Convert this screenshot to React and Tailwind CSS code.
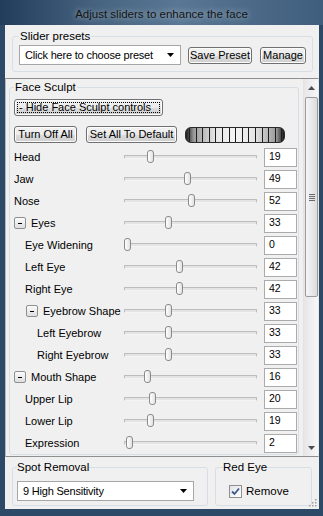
import React from "react";

// slider rows of the Face Sculpt group
const rows = [
  { label: "Head", value: 19, level: "l0" },
  { label: "Jaw", value: 49, level: "l0" },
  { label: "Nose", value: 52, level: "l0" },
  { label: "Eyes", value: 33, level: "l0", toggle: true },
  { label: "Eye Widening", value: 0, level: "l1" },
  { label: "Left Eye", value: 42, level: "l1" },
  { label: "Right Eye", value: 42, level: "l1" },
  { label: "Eyebrow Shape", value: 33, level: "t1", toggle: true },
  { label: "Left Eyebrow", value: 33, level: "l2" },
  { label: "Right Eyebrow", value: 33, level: "l2" },
  { label: "Mouth Shape", value: 16, level: "l0", toggle: true },
  { label: "Upper Lip", value: 20, level: "l1" },
  { label: "Lower Lip", value: 19, level: "l1" },
  { label: "Expression", value: 2, level: "l1" },
];

const indent = {
  l0: "pl-0",
  l1: "pl-[11px]",
  t1: "pl-[12px]",
  l2: "pl-[23px]",
};

const btn =
  "h-[17px] whitespace-nowrap rounded-[3px] border border-[#707070] bg-[linear-gradient(#f2f2f2_0%,#ebebeb_50%,#dddddd_51%,#cfcfcf_100%)] shadow-[inset_0_0_0_1px_#fcfcfc] text-[11px] leading-none text-black";

function Arrow({ up }) {
  return (
    <svg width="7" height="4" viewBox="0 0 7 4">
      <path d={up ? "M0 4 L3.5 0 L7 4 Z" : "M0 0 L7 0 L3.5 4 Z"} fill="#4d4d4d" />
    </svg>
  );
}

function Combo({ text, className }) {
  return (
    <div
      className={`flex h-[20px] items-center justify-between whitespace-nowrap border border-[#a6a6a6] bg-white pl-[5px] pr-[6px] text-[11px] tracking-[-0.2px] ${className}`}
    >
      <span>{text}</span>
      <svg width="7" height="4" viewBox="0 0 7 4">
        <path d="M0 0 L7 0 L3.5 4 Z" fill="#000" />
      </svg>
    </div>
  );
}

function Toggle() {
  return (
    <div className="mr-[5px] flex h-[12px] w-[12px] items-center justify-center rounded-[2px] border border-[#8f8f8f] bg-[linear-gradient(#fbfbfb,#dedede)]">
      <div className="h-px w-[4px] bg-black" />
    </div>
  );
}

function SliderRow({ row }) {
  return (
    <div className="flex h-[22px] items-center">
      <div className={`flex w-[110px] items-center whitespace-nowrap ${indent[row.level]}`}>
        {row.toggle && <Toggle />}
        <span className="text-[11px] leading-none">{row.label}</span>
      </div>
      <div className="relative flex h-[22px] w-[133px] items-center">
        <div className="h-[4px] w-full rounded-[1px] border border-[#bdbdbd] border-b-[#f4f4f4] bg-[#e4e4e4]" />
        <div
          className="absolute top-[4px] h-[13px] w-[7px] rounded-[3px] border border-[#8a8a8a] bg-[linear-gradient(90deg,#ffffff,#e2e2e2)]"
          style={{ left: Math.round(row.value * 1.23) }}
        />
      </div>
      <div className="ml-[7px] flex h-[19px] w-[33px] items-center border border-[#ababab] bg-white pl-[4px] text-[10.5px]">
        {row.value}
      </div>
    </div>
  );
}

export default function App() {
  return (
    <div className="flex h-[516px] w-[323px] flex-col bg-[#2c4968] pb-[7px] pl-[5px] pr-[4px] font-['Liberation_Sans',Arial,sans-serif] text-black">
      {/* title bar */}
      <div className="-ml-[5px] -mr-[4px] flex h-[25px] items-center justify-center bg-[linear-gradient(90deg,#223d5c_0%,#46637f_30%,#5a7895_55%,#3f5d7c_100%)]">
        <span className="whitespace-nowrap pt-[4px] text-[11.5px] text-[#141414] [text-shadow:0_0_6px_rgba(255,255,255,0.6)]">
          Adjust sliders to enhance the face
        </span>
      </div>

      {/* client area */}
      <div className="relative flex flex-1 flex-col bg-[#f0f0f0]">
        <fieldset className="mx-[7px] mt-[5px] rounded-[3px] border border-[#d5dfe5] pb-[6px] pl-[6px] pr-[6px]">
          <legend className="whitespace-nowrap px-[1px] text-[11.5px] leading-[13px]">Slider presets</legend>
          <div className="mt-[2px] flex items-center">
            <Combo text="Click here to choose preset" className="w-[162px]" />
            <button className={`${btn} ml-[7px] w-[64px]`}>Save Preset</button>
            <button className={`${btn} ml-[8px] w-[46px]`}>Manage</button>
          </div>
        </fieldset>

        {/* scrolling panel */}
        <div className="mt-[6px] flex h-[379px] overflow-hidden border border-[#8e8f8f] border-l-[#b9b9b9] border-r-[#e8e8e8] bg-[#f0f0f0]">
          <div className="flex-1 overflow-hidden">
            <fieldset className="ml-[3px] mr-[4px] mt-[2px] rounded-[3px] border border-[#d5dfe5] pl-[4px]">
              <legend className="whitespace-nowrap px-[1px] text-[11.5px] leading-[13px]">Face Sculpt</legend>
              <button className={`${btn} mt-[5px] flex w-[149px] items-center p-[2px]`}>
                <span className="flex h-full w-full items-center border border-dotted border-black pl-[1px]">
                  - Hide Face Sculpt controls
                </span>
              </button>
              <div className="mt-[10px] flex items-center">
                <button className={`${btn} w-[63px]`}>Turn Off All</button>
                <button className={`${btn} ml-[9px] w-[91px]`}>Set All To Default</button>
                <div className="ml-[8px] h-[16px] w-[100px] rounded-[6px] border border-[#2a2a2a] [background:repeating-linear-gradient(90deg,transparent_0_3px,#1c1c1c_3px_4px,transparent_4px_6.6px),linear-gradient(90deg,#1a1a1a_0%,#9a9a9a_8%,#e6e6e6_30%,#f4f4f4_50%,#e6e6e6_70%,#9a9a9a_92%,#1a1a1a_100%)]" />
              </div>
              <div className="mt-[3px] flex flex-col">
                {rows.map((r) => (
                  <SliderRow key={r.label} row={r} />
                ))}
              </div>
            </fieldset>
          </div>

          {/* vertical scrollbar */}
          <div className="flex w-[15px] flex-col border-l border-[#e3e3e3] bg-[linear-gradient(90deg,#e6e6e6,#f7f7f7)]">
            <div className="flex h-[17px] items-center justify-center">
              <Arrow up />
            </div>
            <div className="ml-[1px] mt-[1px] flex h-[200px] w-[13px] flex-col items-center justify-center gap-[1px] rounded-[2px] border border-[#9a9a9a] bg-[linear-gradient(90deg,#f6f6f6,#dcdcdc)]">
              <div className="h-px w-[6px] bg-[#6a6a6a]" />
              <div className="h-px w-[6px] bg-[#6a6a6a]" />
              <div className="h-px w-[6px] bg-[#6a6a6a]" />
              <div className="h-px w-[6px] bg-[#6a6a6a]" />
            </div>
            <div className="flex-1" />
            <div className="flex h-[17px] items-center justify-center">
              <Arrow />
            </div>
          </div>
        </div>

        {/* bottom groups */}
        <div className="flex">
          <fieldset className="ml-[7px] mt-[4px] w-[196px] rounded-[3px] border border-[#d5dfe5] pb-[4px] pl-[4px]">
            <legend className="whitespace-nowrap text-[11.5px] leading-[13px]">Spot Removal</legend>
            <Combo text="9 High Sensitivity" className="mt-[7px] w-[177px]" />
          </fieldset>
          <fieldset className="ml-[7px] mt-[4px] w-[97px] rounded-[3px] border border-[#d5dfe5] pl-[7px]">
            <legend className="whitespace-nowrap text-[11.5px] leading-[13px]">Red Eye</legend>
            <div className="ml-[6px] mt-[9px] flex items-center">
              <div className="flex h-[13px] w-[13px] items-center justify-center border border-[#8f8f8f] bg-[linear-gradient(135deg,#dfe3ea,#ffffff)]">
                <svg width="9" height="9" viewBox="0 0 9 9">
                  <path d="M1 4.5 L3.5 7 L8 1.5" fill="none" stroke="#3b5a86" strokeWidth="1.8" />
                </svg>
              </div>
              <span className="ml-[4px] text-[11.5px]">Remove</span>
            </div>
          </fieldset>
        </div>

        {/* resize grip */}
        <svg className="absolute bottom-[2px] right-[2px]" width="10" height="10" viewBox="0 0 10 10">
          <g fill="#a0a0a0">
            <rect x="8" y="2" width="1.5" height="1.5" />
            <rect x="5" y="5" width="1.5" height="1.5" />
            <rect x="8" y="5" width="1.5" height="1.5" />
            <rect x="2" y="8" width="1.5" height="1.5" />
            <rect x="5" y="8" width="1.5" height="1.5" />
            <rect x="8" y="8" width="1.5" height="1.5" />
          </g>
        </svg>
      </div>
    </div>
  );
}
